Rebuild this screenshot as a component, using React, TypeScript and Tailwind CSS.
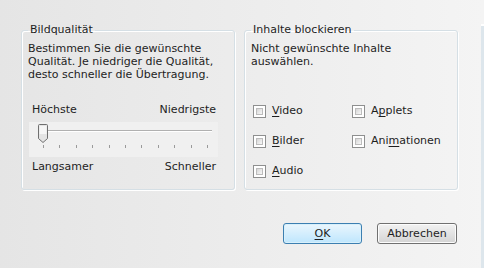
import React from 'react'

const font = { fontFamily: '"DejaVu Sans", Verdana, sans-serif' }

function Checkbox({ pre, hot, post }: { pre?: string; hot: string; post: string }) {
  return (
    <label className="flex items-center gap-[6px] h-[14px]">
      <span className="w-[13px] h-[13px] border border-[#8e8f8f] bg-white p-[2px] shrink-0">
        <span className="block w-full h-full border border-[#bcbcbc] bg-linear-to-br from-[#d6d6d6] to-[#f8f8f8]" />
      </span>
      <span className="text-[#1e1e1e] leading-[14px]">
        {pre}
        <span className="underline underline-offset-2">{hot}</span>
        {post}
      </span>
    </label>
  )
}

function Slider() {
  const ticks = Array.from({ length: 11 }, (_, i) => 14 + i * 16.4)
  return (
    <div className="ml-[1px] w-[189px] h-[35px] bg-[#f0f0f0]">
      <svg width="189" height="35" viewBox="0 0 189 35">
        <line x1="19" y1="8.5" x2="183" y2="8.5" stroke="#b0b0b0" />
        <line x1="19" y1="9.5" x2="183" y2="9.5" stroke="#ffffff" />
        {ticks.map((x, i) => (
          <line key={i} x1={Math.round(x) + 0.5} y1="23" x2={Math.round(x) + 0.5} y2="26" stroke="#9a9a9a" />
        ))}
        <path
          d="M9.5 3.5 Q9.5 2.5 10.5 2.5 L17.5 2.5 Q18.5 2.5 18.5 3.5 L18.5 16.5 L14 20.5 L9.5 16.5 Z"
          fill="#e4e4e4"
          stroke="#6f6f6f"
        />
        <path d="M10.5 4 L17.5 4 L17.5 12 L10.5 12 Z" fill="#f6f6f6" />
      </svg>
    </div>
  )
}

export default function App() {
  return (
    <div style={font} className="w-[484px] h-[268px] flex text-[11px] text-[#1e1e1e] bg-linear-to-r from-[#e5e5e5] to-[#f4f4f4]">
      <div className="w-[481px] flex flex-col pl-[21px] pt-[23px]">
        <div className="flex gap-[9px]">
          <fieldset className="w-[214px] h-[167px] border border-[#d5dfe5] rounded-[3px] shadow-[inset_1px_1px_0_#fff,1px_1px_0_#fff] pl-[6px] pr-[2px]">
            <legend className="px-[2px] leading-[14px]">Bildqualität</legend>
            <p className="leading-[13px] mt-[5px] whitespace-nowrap">
              Bestimmen Sie die gewünschte
              <br />
              Qualität. Je niedriger die Qualität,
              <br />
              desto schneller die Übertragung.
            </p>
            <div className="flex justify-between pl-[4px] pr-[16px] mt-[22px] leading-[13px]">
              <span>Höchste</span>
              <span>Niedrigste</span>
            </div>
            <div className="mt-[6px]">
              <Slider />
            </div>
            <div className="flex justify-between pl-[4px] pr-[16px] mt-[3px] leading-[13px]">
              <span>Langsamer</span>
              <span>Schneller</span>
            </div>
          </fieldset>
          <fieldset className="w-[214px] h-[167px] border border-[#d5dfe5] rounded-[3px] shadow-[inset_1px_1px_0_#fff,1px_1px_0_#fff] pl-[6px]">
            <legend className="px-[2px] leading-[14px]">Inhalte blockieren</legend>
            <p className="leading-[13px] mt-[5px]">
              Nicht gewünschte Inhalte
              <br />
              auswählen.
            </p>
            <div className="grid grid-cols-[99px_99px] gap-y-[16px] mt-[36px] pl-[2px]">
              <Checkbox hot="V" post="ideo" />
              <Checkbox pre="A" hot="p" post="plets" />
              <Checkbox hot="B" post="ilder" />
              <Checkbox pre="Ani" hot="m" post="ationen" />
              <Checkbox hot="A" post="udio" />
            </div>
          </fieldset>
        </div>
        <div className="flex justify-end gap-[15px] mt-[33px] pr-[24px]">
          <button className="w-[79px] h-[21px] rounded-[3px] border border-[#3c7fb1] bg-linear-to-b from-[#eaf6fd] to-[#bee6fd] shadow-[inset_0_0_0_1px_#d8f0fb] leading-[13px]">
            <span className="underline underline-offset-2">O</span>K
          </button>
          <button className="w-[80px] h-[21px] rounded-[3px] border border-[#707070] bg-linear-to-b from-[#f2f2f2] to-[#d4d4d4] shadow-[inset_0_0_0_1px_#fcfcfc] leading-[13px]">
            Abbrechen
          </button>
        </div>
      </div>
      <div className="w-[3px] pt-[24px] flex flex-col">
        <div className="h-[2px] bg-white" />
        <div className="flex-1 bg-[#dde6ec]" />
      </div>
    </div>
  )
}
